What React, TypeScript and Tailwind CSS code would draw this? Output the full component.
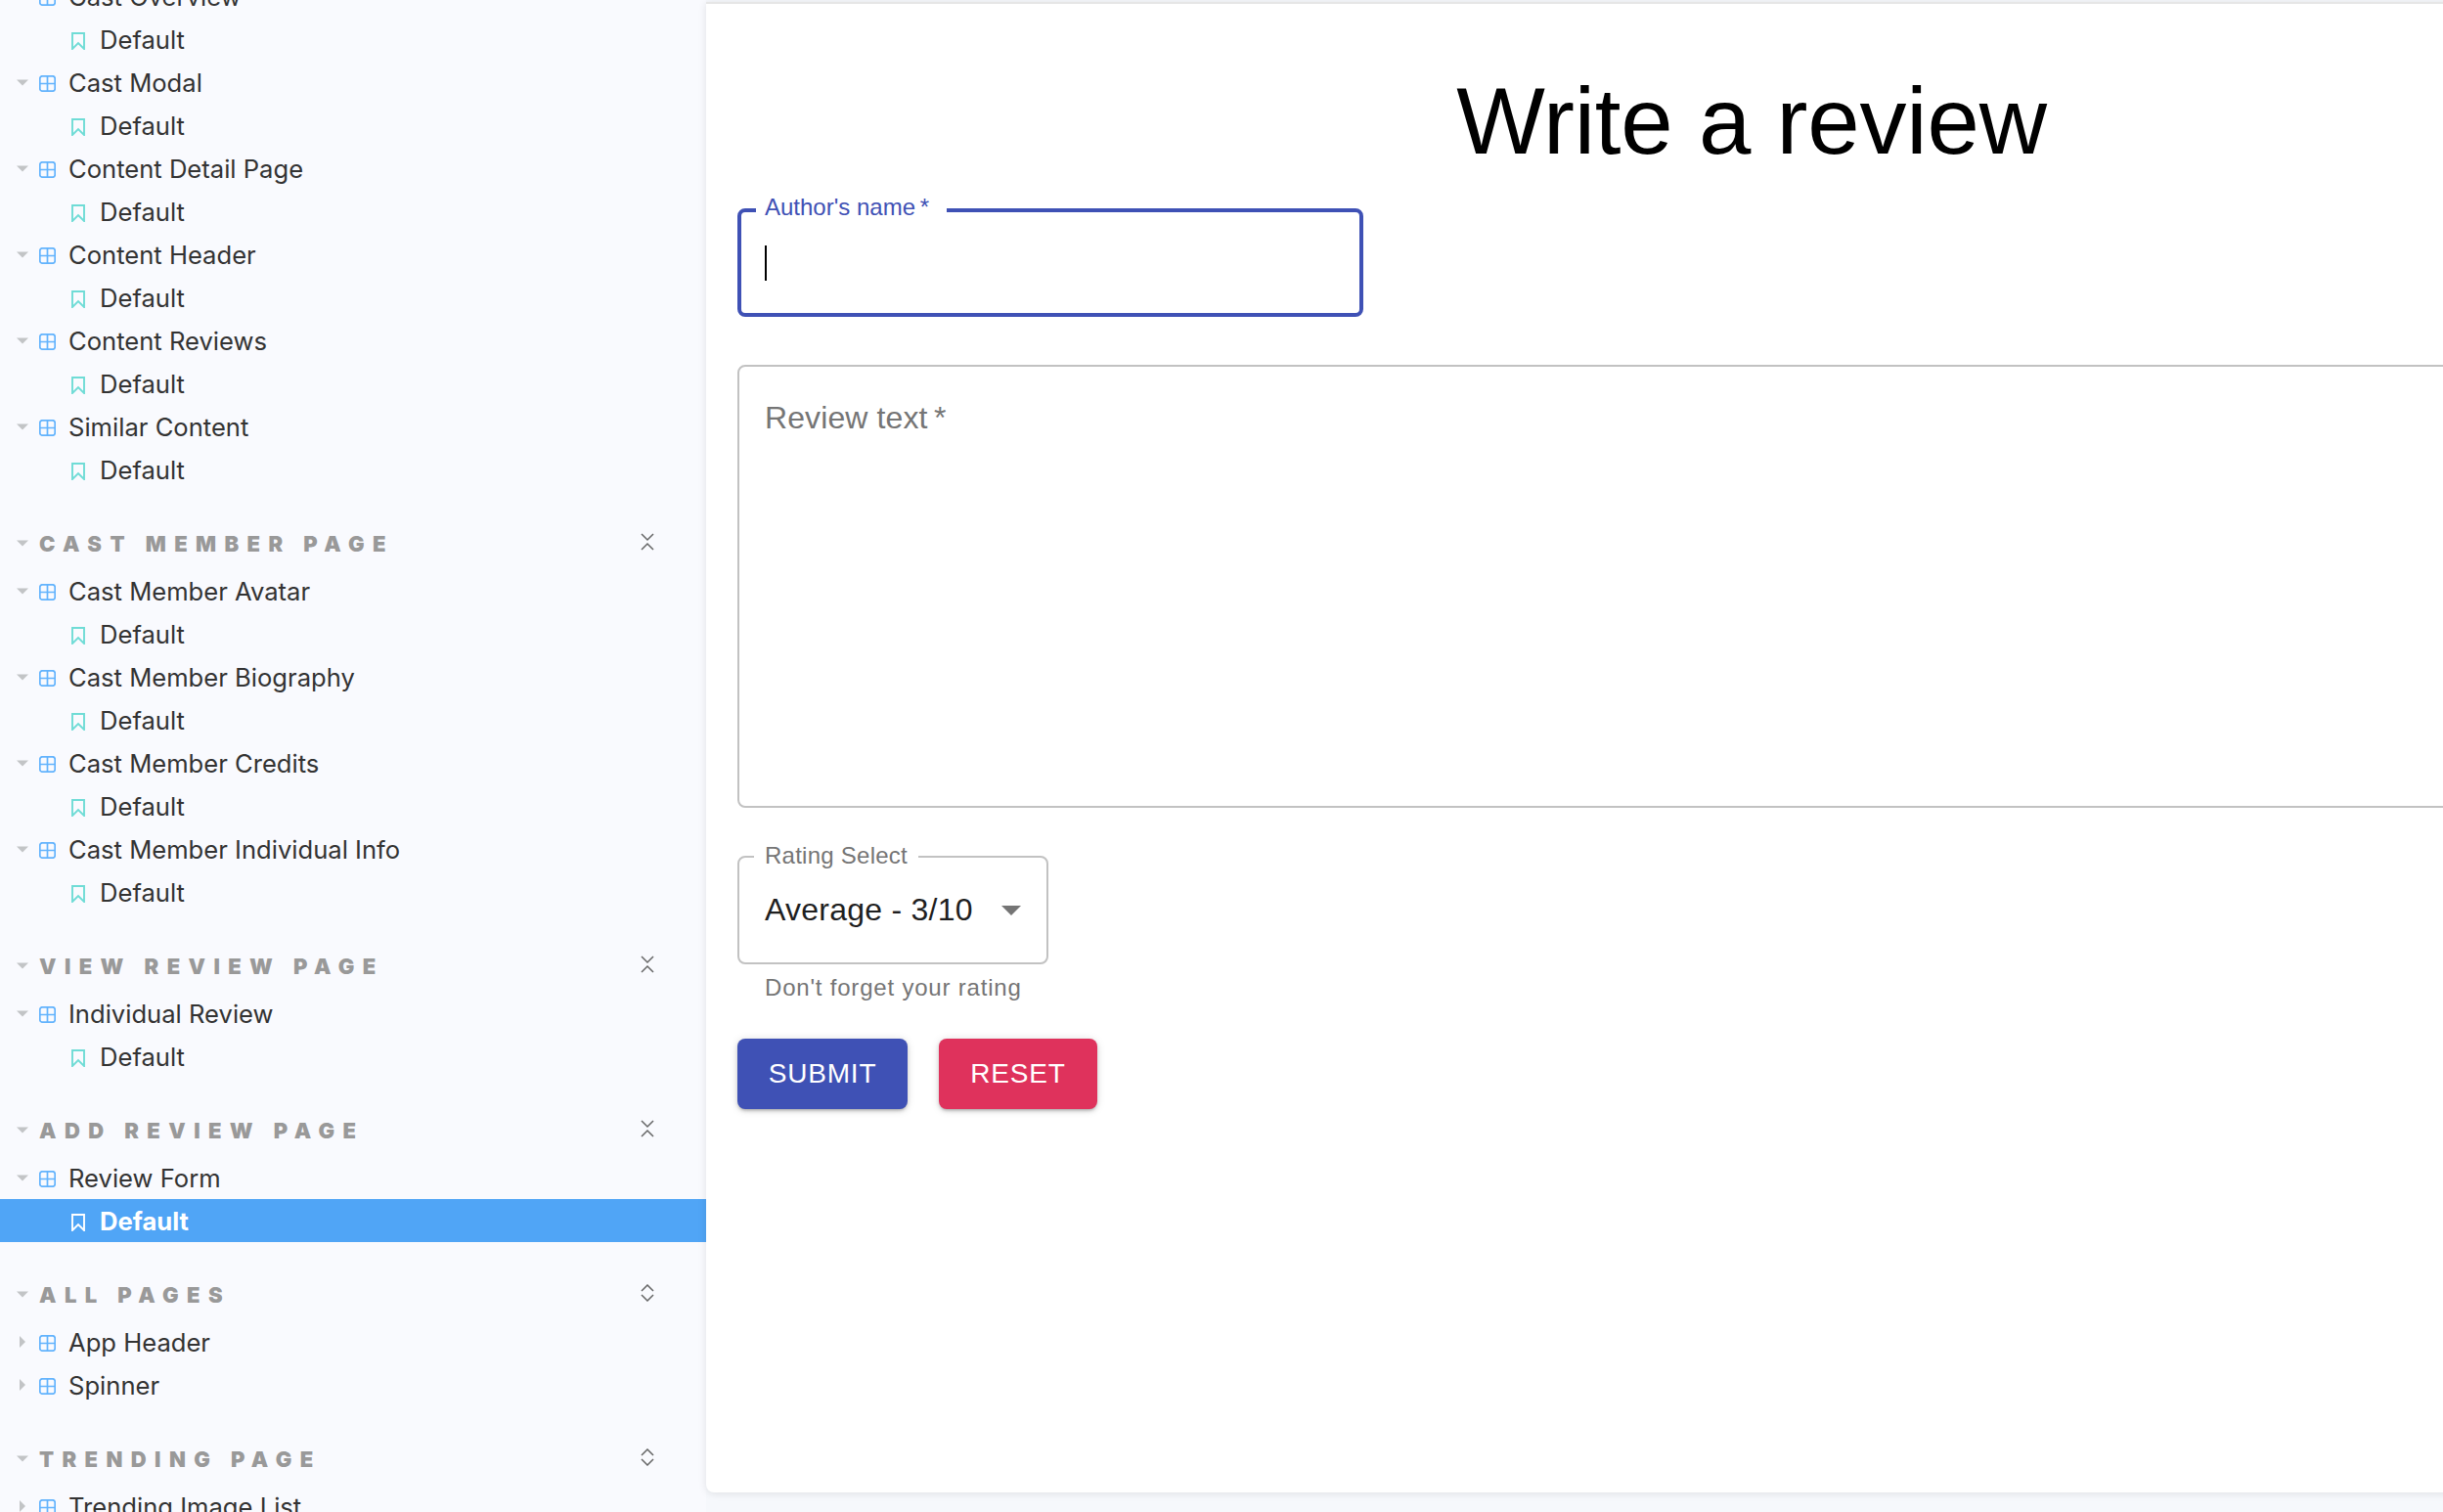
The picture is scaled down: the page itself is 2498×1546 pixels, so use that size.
import { ReactNode } from 'react';

type Item = { label: string; open?: boolean; active?: boolean };
type Section = { title?: string; open?: boolean; items: Item[] };

const sections: Section[] = [
  {
    items: [
      { label: 'Cast Overview', open: true },
      { label: 'Cast Modal', open: true },
      { label: 'Content Detail Page', open: true },
      { label: 'Content Header', open: true },
      { label: 'Content Reviews', open: true },
      { label: 'Similar Content', open: true },
    ],
  },
  {
    title: 'Cast Member Page',
    open: true,
    items: [
      { label: 'Cast Member Avatar', open: true },
      { label: 'Cast Member Biography', open: true },
      { label: 'Cast Member Credits', open: true },
      { label: 'Cast Member Individual Info', open: true },
    ],
  },
  {
    title: 'View Review Page',
    open: true,
    items: [{ label: 'Individual Review', open: true }],
  },
  {
    title: 'Add Review Page',
    open: true,
    items: [{ label: 'Review Form', open: true, active: true }],
  },
  {
    title: 'All Pages',
    items: [{ label: 'App Header' }, { label: 'Spinner' }],
  },
  {
    title: 'Trending Page',
    items: [{ label: 'Trending Image List' }],
  },
];

function CaretDown() {
  return (
    <svg width="12" height="7" viewBox="0 0 12 7" className="shrink-0">
      <path d="M0 0.5h12L6 6.5z" fill="#c2c4c6" />
    </svg>
  );
}

function CaretRight() {
  return (
    <svg width="6" height="12" viewBox="0 0 6 12" className="shrink-0">
      <path d="M0 0l6 6-6 6z" fill="#c2c4c6" />
    </svg>
  );
}

function ComponentIcon() {
  return (
    <svg width="17" height="17" viewBox="0 0 17 17" className="shrink-0 mt-[2px]" fill="none" stroke="#62b3fd" strokeWidth="1.7">
      <rect x="0.8" y="0.8" width="15.4" height="15.4" rx="2.5" />
      <path d="M8.5 1v15M1 8.5h15" />
    </svg>
  );
}

function BookmarkIcon({ color }: { color: string }) {
  return (
    <svg width="14" height="18" viewBox="0 0 14 18" className="shrink-0 mt-[4px]" fill="none" stroke={color} strokeWidth="1.9">
      <path d="M1 1h12v16L7 11 1 17z" />
    </svg>
  );
}

function Chevrons({ open }: { open?: boolean }) {
  return (
    <svg width="14" height="18" viewBox="0 0 14 18" className="-mt-[3px]" fill="none" stroke="#666" strokeWidth="1.5">
      {open ? <path d="M1 1l6 6 6-6M1 17l6-6 6 6" /> : <path d="M1 7l6-6 6 6M1 11l6 6 6-6" />}
    </svg>
  );
}

function SectionHeader({ title, open }: { title: string; open?: boolean }) {
  return (
    <div className="mt-[26px] h-[54px] flex items-center pl-[17px] pr-[53px]">
      <CaretDown />
      <div className="ml-[11px] mt-[2px] flex-1 text-[22px] font-black uppercase tracking-[8.4px] text-[#999]">{title}</div>
      <Chevrons open={open} />
    </div>
  );
}

function TreeRows({ item }: { item: Item }) {
  return (
    <>
      <div className="h-[44px] flex items-center text-[25.6px] text-[#333]">
        <div className="w-[40px] pl-[17px] flex items-center">
          {item.open ? <CaretDown /> : <div className="pl-[3px] flex"><CaretRight /></div>}
        </div>
        <ComponentIcon />
        <span className="ml-[13px] mt-[2px]">{item.label}</span>
      </div>
      {item.open && (
        <div
          className={`h-[44px] flex items-center pl-[73px] text-[25.6px] ${
            item.active ? 'bg-[#50a5f6] text-white font-bold' : 'text-[#333]'
          }`}
        >
          <BookmarkIcon color={item.active ? '#ffffff' : '#6fdcd6'} />
          <span className="ml-[15px] mt-[2px]">Default</span>
        </div>
      )}
    </>
  );
}

function Sidebar() {
  return (
    <aside className="w-[722px] shrink-0 h-full overflow-hidden bg-[#f9fafe] font-['Inter',sans-serif]">
      <div className="-mt-[26px]">
        {sections.map((section, i) => (
          <div key={i}>
            {section.title && <SectionHeader title={section.title} open={section.open} />}
            {section.items.map((item) => (
              <TreeRows key={item.label} item={item} />
            ))}
          </div>
        ))}
      </div>
    </aside>
  );
}

function FloatingLabel({ children, className }: { children: ReactNode; className: string }) {
  return <span className={`absolute bg-white text-[24px] leading-[28px] ${className}`}>{children}</span>;
}

function Button({ children, className }: { children: ReactNode; className: string }) {
  return (
    <button
      className={`h-[72px] rounded-lg text-[28px] tracking-[0.8px] uppercase text-white shadow-[0_3px_3px_-2px_rgba(0,0,0,0.2),0_2px_4px_0_rgba(0,0,0,0.14),0_1px_10px_0_rgba(0,0,0,0.12)] ${className}`}
    >
      {children}
    </button>
  );
}

function ReviewForm() {
  return (
    <div className="w-[2074px] ml-[32px]">
      <h1 className="mt-[64px] text-center text-[96px] leading-[112px] tracking-[-0.2px] text-black">Write a review</h1>

      <div className="relative mt-[33px] w-[640px] h-[111px] rounded-lg border-4 border-[#3f51b5] flex items-center pl-[24px]">
        <FloatingLabel className="left-[15px] -top-[19px] pl-[9px] pr-[18px] text-[#3f51b5]">Author's name{'\u2009'}*</FloatingLabel>
        <div className="w-[2px] h-[36px] bg-black" />
      </div>

      <div className="mt-[49px] h-[453px] rounded-lg border-2 border-[#c2c2c2] pl-[26px] pt-[33px] text-[32px] leading-[38px] tracking-[0.1px] text-[#757575]">
        Review text{'\u2009'}*
      </div>

      <div className="relative mt-[49px] w-[318px] h-[111px] rounded-lg border-2 border-[#c2c2c2] flex items-center justify-between pl-[26px] pr-[26px]">
        <FloatingLabel className="left-[15px] -top-[16px] pl-[11px] pr-[11px] tracking-[0.25px] text-[#757575]">Rating Select</FloatingLabel>
        <span className="-mt-[2px] text-[32px] leading-[38px] tracking-[0.25px] text-[#1f1f1f]">Average - 3/10</span>
        <svg width="20" height="10" viewBox="0 0 20 10">
          <path d="M0 0h20L10 10z" fill="#757575" />
        </svg>
      </div>
      <div className="mt-[10px] ml-[28px] text-[24px] leading-[28px] tracking-[0.8px] text-[#757575]">Don't forget your rating</div>

      <div className="mt-[38px] flex gap-[32px]">
        <Button className="w-[174px] bg-[#3f51b5]">Submit</Button>
        <Button className="w-[162px] bg-[#df325c]">Reset</Button>
      </div>
    </div>
  );
}

export default function App() {
  return (
    <div className="w-[2498px] h-[1546px] flex overflow-hidden bg-[#f6f8fc]">
      <Sidebar />
      <main className="w-[2140px] shrink-0 h-[1524px] mt-[2px] border-t-2 border-[#e6e6e6] bg-white rounded-bl-lg shadow-[0_1px_8px_rgba(0,0,0,0.1)] font-['Liberation_Sans',Arial,sans-serif]">
        <ReviewForm />
      </main>
    </div>
  );
}
